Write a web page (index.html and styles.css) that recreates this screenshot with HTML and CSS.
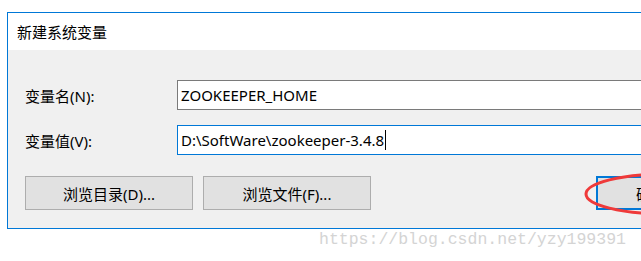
FILE: index.html
```html
<!DOCTYPE html>
<html lang="zh-CN">
<head>
  <meta charset="UTF-8" />
  <title>新建系统变量</title>
  <link rel="stylesheet" href="styles.css">
</head>
<body>

  <div class="dialog" role="dialog" aria-label="新建系统变量">
    <div class="dialog-title">新建系统变量</div>

    <div class="dialog-body">
      <div class="field">
        <label for="var-name">变量名(N):</label>
        <div class="text-box">ZOOKEEPER_HOME</div>
      </div>

      <div class="field">
        <label for="var-value">变量值(V):</label>
        <div class="text-box focused">D:\SoftWare\zookeeper-3.4.8<span class="caret"></span></div>
      </div>

      <div class="button-row">
        <button type="button">浏览目录(D)...</button>
        <button type="button">浏览文件(F)...</button>
        <div class="button-group">
          <button type="button" class="default-btn">确定</button>
          <button type="button">取消</button>
        </div>
      </div>
    </div>

    <!-- red marker drawn over the OK button -->
    <svg class="marker" width="120" height="50" viewBox="0 0 120 50">
      <ellipse cx="82" cy="23" rx="80" ry="20" fill="none" stroke="#ef3a3a" stroke-width="3" />
    </svg>
  </div>

  <div class="watermark">https://blog.csdn.net/yzy199391</div>

</body>
</html>
```

FILE: styles.css
```css
* {
  box-sizing: border-box;
}

body, html {
  margin: 0;
  width: 641px;
  height: 261px;
  overflow: hidden;
  background: #fff;
  font-family: "Noto Sans", "Noto Sans CJK SC", sans-serif;
  font-size: 15px;
  color: #000;
}

.dialog {
  position: relative;
  width: 836px;
  margin: 12px 0 0 7px;
  border: 1px solid #0078d7;
  border-right: none;
}

.dialog-title {
  height: 37px;
  display: flex;
  align-items: center;
  padding-left: 9px;
  background: #fff;
}

.dialog-body {
  background: #f0f0f0;
  padding: 30px 0 18px 17px;
}

.field {
  display: flex;
  align-items: center;
  margin-bottom: 15px;
}

.field label {
  width: 152px;
  padding-left: 0;
}

.text-box {
  flex: 1;
  height: 30px;
  display: flex;
  align-items: center;
  padding-left: 3px;
  background: #fff;
  border: 1px solid #7a7a7a;
  white-space: nowrap;
}

.text-box.focused {
  border-color: #0078d7;
}

.caret {
  display: inline-block;
  width: 1px;
  height: 20px;
  margin-left: 1px;
  background: #000;
}

.button-row {
  display: flex;
  gap: 10px;
  margin-top: 21px;
}

.button-row button {
  width: 168px;
  height: 34px;
  background: #e1e1e1;
  border: 1px solid #adadad;
  font-family: inherit;
  font-size: 15px;
  color: #000;
  padding: 0;
}

.button-group {
  display: flex;
  gap: 10px;
  margin-left: auto;
  padding-right: 17px;
}

.button-group button {
  width: 110px;
}

.button-group .default-btn {
  border: 2px solid #0078d7;
}

.marker {
  position: absolute;
  left: 576px;
  top: 158px;
  overflow: visible;
}

.watermark {
  padding: 1px 0 0 319px;
  font-family: "Liberation Mono", monospace;
  font-size: 16.5px;
  line-height: 20px;
  color: #d4d4d4;
}
```
